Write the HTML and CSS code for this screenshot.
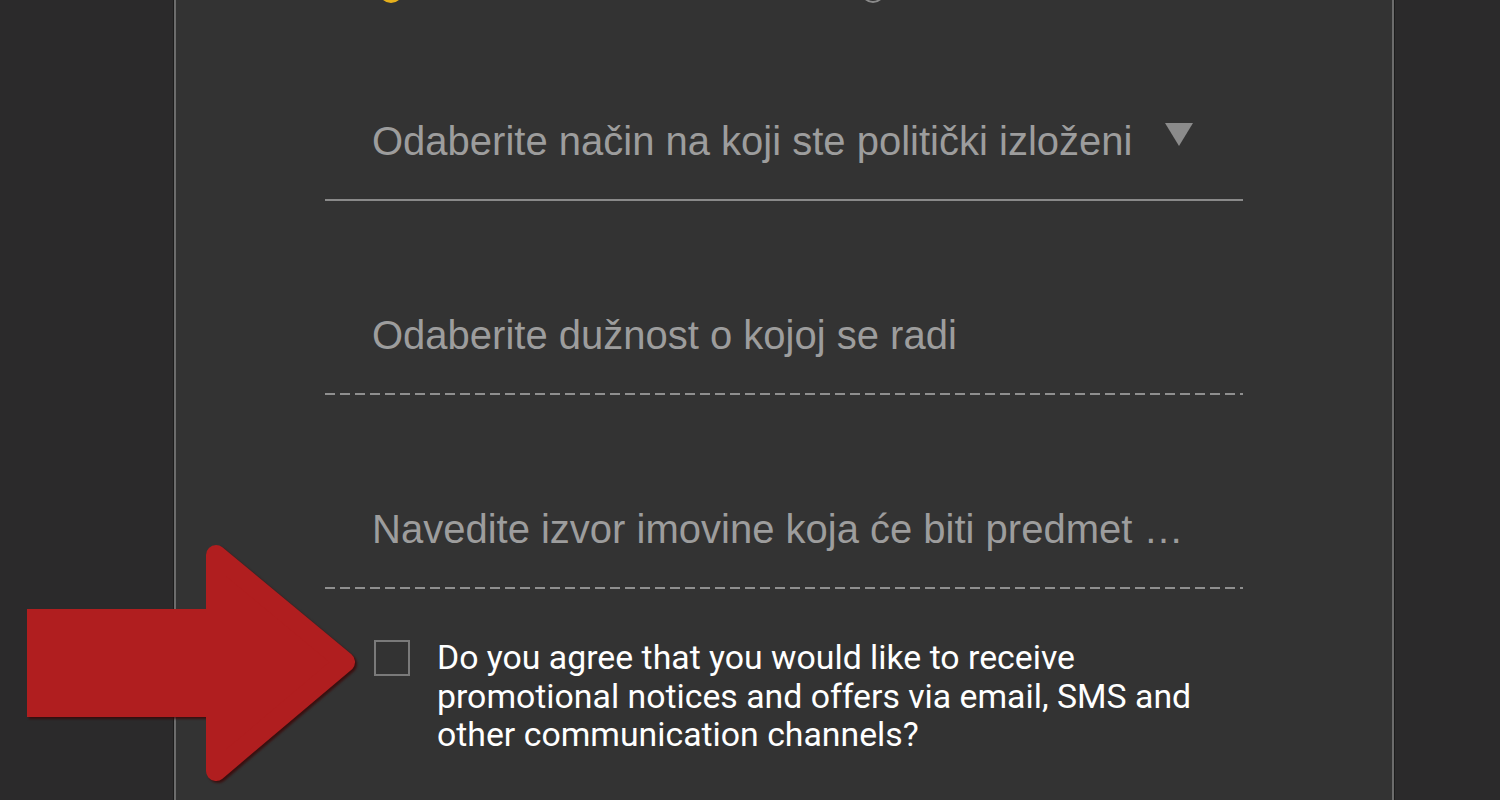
FILE: index.html
```html
<!DOCTYPE html>
<html lang="hr">
<head>
    <meta charset="UTF-8">
    <meta name="viewport" content="width=device-width, initial-scale=1.0">
    <title>Obrazac</title>
    <link rel="stylesheet" href="styles.css">
</head>
<body>
    <div class="panel">
        <div class="radio-row">
            <span class="radio selected"></span>
            <span class="radio"></span>
        </div>

        <form class="form">
            <div class="field select">
                <span class="value">Odaberite način na koji ste politički izloženi</span>
                <span class="caret"></span>
            </div>

            <div class="field dashed">
                <span class="value">Odaberite dužnost o kojoj se radi</span>
            </div>

            <div class="field dashed">
                <span class="value">Navedite izvor imovine koja će biti predmet …</span>
            </div>

            <label class="consent">
                <input type="checkbox">
                <span>Do you agree that you would like to receive promotional notices and offers via email, SMS and other communication channels?</span>
            </label>
        </form>
    </div>

    <!-- annotation arrow -->
    <svg class="pointer" width="350" height="260" viewBox="0 0 350 260">
        <g fill="#b01e1f" stroke="#b01e1f">
            <rect x="7" y="74" width="195" height="108" stroke-width="0"></rect>
            <polygon points="196,20 325,127 196,236" stroke-width="20" stroke-linejoin="round"></polygon>
        </g>
    </svg>
</body>
</html>
```

FILE: styles.css
```css
body {
    margin: 0;
    background-color: #2b2a2b;
    height: 800px;
    overflow: hidden;
    position: relative;
    font-family: "Liberation Sans", Arial, sans-serif;
}
.panel {
    display: flow-root;
    margin-left: 174px;
    width: 1067px;
    height: 800px;
    padding-left: 149px;
    background-color: #333333;
    border-left: 2px solid #6c6c6c;
    border-right: 2px solid #6c6c6c;
    box-shadow: -1px 0 0 #1c1c1c, 1px 0 0 #1c1c1c;
}
.radio-row {
    display: flex;
    margin-top: -21px;
    padding-left: 54px;
    gap: 458px;
    height: 24px;
}
.radio {
    display: block;
    width: 20px;
    height: 20px;
    border-radius: 50%;
    border: 2px solid #8a8a8a;
}
.radio.selected {
    border-color: #e6b01c;
    background-color: #e6b01c;
}
.form {
    width: 918px;
}
.field {
    display: flex;
    justify-content: space-between;
    padding: 0 50px 34px 47px;
    margin-top: 110px;
    font-size: 40px;
    line-height: 48px;
    color: #9d9d9d;
}
.field:first-child {
    margin-top: 114px;
}
.select {
    border-bottom: 2px solid #8a8a8a;
}
.dashed {
    padding-bottom: 36px;
    background-image: linear-gradient(to right, #8f8f8f 10px, transparent 10px);
    background-size: 15px 2px;
    background-repeat: repeat-x;
    background-position: left bottom;
}
.caret {
    margin-top: 6px;
    width: 0;
    height: 0;
    border-left: 14px solid transparent;
    border-right: 14px solid transparent;
    border-top: 23px solid #8b8b8b;
}
.consent {
    display: flex;
    align-items: flex-start;
    gap: 27px;
    margin-top: 50px;
    padding-left: 49px;
    font-family: Roboto, "Liberation Sans", sans-serif;
    font-size: 33.8px;
    line-height: 38.5px;
    color: #ffffff;
}
.consent input {
    appearance: none;
    margin: 1px 0 0 0;
    flex: none;
    width: 36px;
    height: 36px;
    border: 2px solid #7a7a7a;
    background: transparent;
}
.pointer {
    position: absolute;
    left: 20px;
    top: 535px;
    filter: drop-shadow(2px 2px 1px rgba(60, 0, 0, 0.7));
}
```
